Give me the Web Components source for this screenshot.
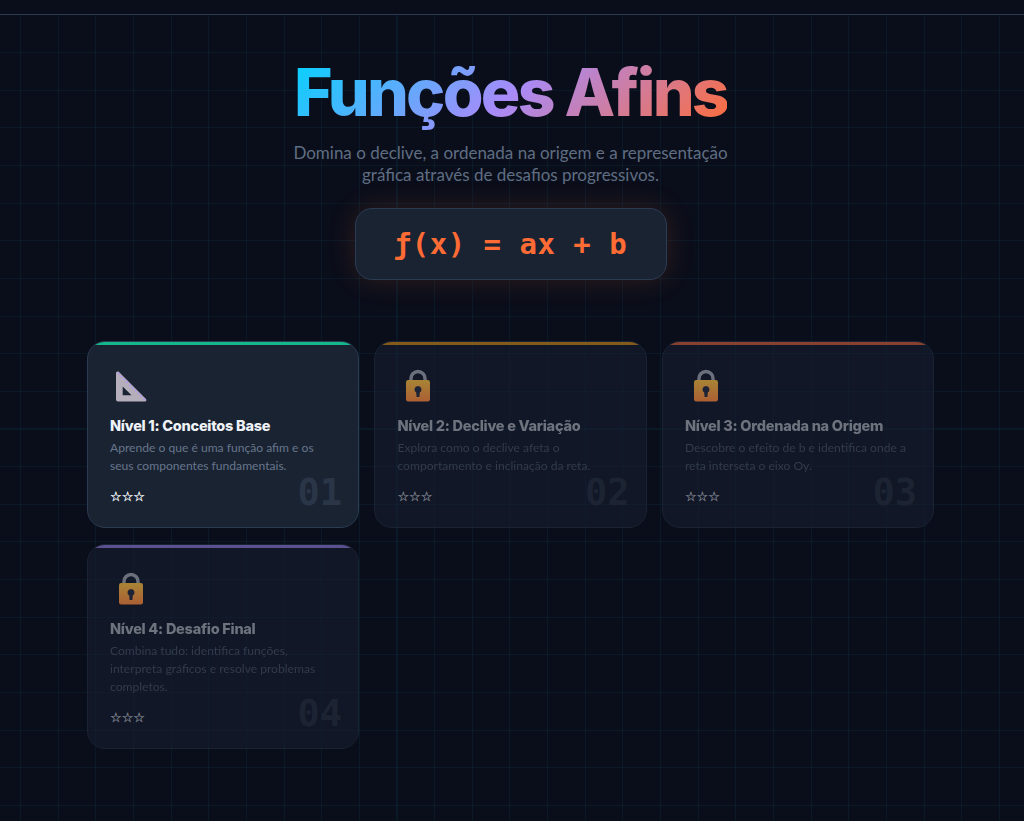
<!DOCTYPE html>
<html lang="pt">
<head>
<meta charset="utf-8">
<title>Funções Afins</title>
<style>
	html, body { margin: 0; background: #0a0e1a; }
	body { font-family: Lato, "Noto Sans", sans-serif; }
</style>
</head>
<body>
<level-app>
	<page-header>
		<span slot="title">Funções Afins</span>
		<span slot="subtitle">Domina o declive, a ordenada na origem e a representação<br>gráfica através de desafios progressivos.</span>
	</page-header>
	<formula-box>ƒ(x) = ax + b</formula-box>
	<level-grid>
		<level-card accent="#14b88c" number="01" icon="ruler">
			<span slot="title">Nível 1: Conceitos Base</span>
			Aprende o que é uma função afim e os seus componentes fundamentais.
		</level-card>
		<level-card accent="#f59e0b" number="02" icon="lock" locked>
			<span slot="title">Nível 2: Declive e Variação</span>
			Explora como o declive afeta o comportamento e inclinação da reta.
		</level-card>
		<level-card accent="#ff6b35" number="03" icon="lock" locked>
			<span slot="title">Nível 3: Ordenada na Origem</span>
			Descobre o efeito de b e identifica onde a reta interseta o eixo Oy.
		</level-card>
		<level-card accent="#a78bfa" number="04" icon="lock" locked>
			<span slot="title">Nível 4: Desafio Final</span>
			Combina tudo: identifica funções, interpreta gráficos e resolve problemas completos.
		</level-card>
	</level-grid>
</level-app>

<script>
const gridLine = 'rgba(0, 212, 255, 0.055)';

class LevelApp extends HTMLElement {
	constructor() {
		super();
		this.attachShadow({ mode: 'open' });
		this.shadowRoot.innerHTML = `
			<style>
				:host {
					display: block;
					box-sizing: border-box;
					margin-top: 14px;
					min-height: 807px;
					padding: 0 90px 0 87px;
					border-top: 1px solid #2a3b52;
					background-image:
						repeating-linear-gradient(90deg, ${gridLine} -17.65px, ${gridLine} -16.65px, transparent -16.65px, transparent 20px),
						repeating-linear-gradient(180deg, ${gridLine} -0.65px, ${gridLine} 0.35px, transparent 0.35px, transparent 37px);
				}
			</style>
			<slot></slot>
		`;
	}
}

const pageHeaderTemplate = document.createElement('template');
pageHeaderTemplate.innerHTML = `
	<style>
		:host {
			display: block;
			padding-top: 37px;
			text-align: center;
		}
		h1 {
			margin: 0;
			font-family: Inter, sans-serif;
			font-size: 66px;
			line-height: 80px;
			font-weight: 800;
			letter-spacing: -2.75px;
		}
		h1 span {
			background: linear-gradient(135deg, #00d4ff 0%, #a78bfa 50%, #ff6b35 100%);
			-webkit-background-clip: text;
			background-clip: text;
			color: transparent;
		}
		p {
			margin: 10px 0 0;
			font-size: 17px;
			line-height: 22px;
			color: #5f6d83;
		}
	</style>
	<h1><span><slot name="title"></slot></span></h1>
	<p><slot name="subtitle"></slot></p>
`;

class PageHeader extends HTMLElement {
	constructor() {
		super();
		this.attachShadow({ mode: 'open' });
		this.shadowRoot.appendChild(pageHeaderTemplate.content.cloneNode(true));
	}
}

class FormulaBox extends HTMLElement {
	constructor() {
		super();
		this.attachShadow({ mode: 'open' });
		this.shadowRoot.innerHTML = `
			<style>
				:host {
					display: block;
					box-sizing: border-box;
					width: 312px;
					height: 72px;
					margin: 22px auto 61px;
					border: 1px solid #2a3b52;
					border-radius: 17px;
					background: #1a2332;
					box-shadow: 0 0 28px rgba(255, 107, 53, 0.16);
					color: #ff6b35;
					font: 700 29px/70px "DejaVu Sans Mono", monospace;
					letter-spacing: 0.5px;
					text-align: center;
				}
			</style>
			<slot></slot>
		`;
	}
}

class LevelGrid extends HTMLElement {
	constructor() {
		super();
		this.attachShadow({ mode: 'open' });
		this.shadowRoot.innerHTML = `
			<style>
				:host {
					display: grid;
					grid-template-columns: repeat(3, 1fr);
					align-items: start;
					column-gap: 15.4px;
					row-gap: 16px;
				}
			</style>
			<slot></slot>
		`;
	}
}

const levelIcons = {
	ruler: `
		<svg width="40" height="40" viewBox="0 0 40 40">
			<path fill="#b5aebb" fill-rule="evenodd" d="M6 7 Q6 5.5 7.5 5.5 H8.5 L36 33 Q37 35.5 35 35.5 H8 Q6 35.5 6 33.5 Z M12.7 20.5 V29.3 H21.5 Z"/>
			<path fill="none" stroke="#b296f2" stroke-width="1.8" stroke-dasharray="1.8 2.2" d="M8 7 L35.5 34.5"/>
		</svg>`,
	lock: `
		<svg width="40" height="40" viewBox="0 0 40 40">
			<defs>
				<linearGradient id="lockBody" x1="0" y1="0" x2="0" y2="1">
					<stop offset="0" stop-color="#a88436"/>
					<stop offset="1" stop-color="#ab5f33"/>
				</linearGradient>
			</defs>
			<path fill="none" stroke="#6c707c" stroke-width="3.4" d="M13 16 V12.5 A7 7 0 0 1 27 12.5 V16"/>
			<rect x="8" y="14" width="24" height="21.5" rx="2.2" fill="url(#lockBody)"/>
			<path fill="#1d2235" d="M20 20 a3.5 3.5 0 0 1 1.8 6.5 L21.4 31 H18.6 L18.2 26.5 A3.5 3.5 0 0 1 20 20Z"/>
		</svg>`
};

class LevelCard extends HTMLElement {
	constructor() {
		super();
		this.attachShadow({ mode: 'open' });
	}

	connectedCallback() {
		const accent = this.getAttribute('accent');
		const number = this.getAttribute('number');
		const icon = levelIcons[this.getAttribute('icon')];
		this.shadowRoot.innerHTML = `
			<style>
				:host {
					display: block;
					position: relative;
					box-sizing: border-box;
					overflow: hidden;
					padding: 24px 22px 22px;
					border: 1px solid #2a3b52;
					border-radius: 18px;
					background: #1a2332;
				}
				:host([locked]) {
					border-color: #1a2333;
					background: rgba(24, 32, 50, 0.5);
				}
				.bar {
					position: absolute;
					top: -1px;
					left: 0;
					right: 0;
					height: 3.5px;
					background: ${accent};
				}
				:host([locked]) .bar { opacity: 0.5; }
				.icon {
					display: block;
					height: 40px;
					margin: 0 0 10px 0;
				}
				:host([locked]) .icon { margin-left: 1px; filter: blur(0.4px); }
				h2 {
					margin: 0;
					font-family: Inter, sans-serif;
					font-size: 14.5px;
					line-height: 20px;
					font-weight: 800;
					letter-spacing: -0.25px;
					color: #eef2f7;
				}
				p {
					margin: 3px 0 0;
					font-size: 12.1px;
					line-height: 18px;
					color: #67768c;
				}
				.stars {
					margin-top: 14px;
					font: 13px/16px "DejaVu Sans", sans-serif;
					-webkit-text-stroke: 0.3px currentColor;
					color: #f4f6fa;
				}
				.number {
					position: absolute;
					right: 16px;
					bottom: 14px;
					font: 700 37px/40px "DejaVu Sans Mono", monospace;
					color: #2a3547;
				}
				:host([locked]) h2 { color: #6e737e; filter: blur(0.4px); }
				:host([locked]) p { color: #333b4c; filter: blur(0.4px); }
				:host([locked]) .stars { color: #7a7f8a; }
				:host([locked]) .number { color: #1c2433; }
			</style>
			<div class="bar"></div>
			<div class="icon">${icon}</div>
			<h2><slot name="title"></slot></h2>
			<p><slot></slot></p>
			<div class="stars">☆☆☆</div>
			<div class="number">${number}</div>
		`;
	}
}

customElements.define('level-app', LevelApp);
customElements.define('page-header', PageHeader);
customElements.define('formula-box', FormulaBox);
customElements.define('level-grid', LevelGrid);
customElements.define('level-card', LevelCard);
</script>
</body>
</html>
